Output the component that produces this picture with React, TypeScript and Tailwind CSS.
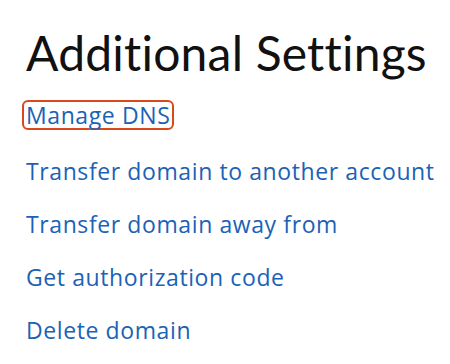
const links = [
  "Transfer domain to another account",
  "Transfer domain away from",
  "Get authorization code",
  "Delete domain",
];

export default function App() {
  return (
    <main className="h-[364px] w-[450px] bg-white pl-[26px] pt-[24px] font-['Lato',sans-serif]">
      <h2 className="text-[48px] leading-[58px] font-normal tracking-[0.2px] text-[#111111]">Additional Settings</h2>
      <div className="mt-[18px] flex flex-col items-start gap-[25px] font-['Open_Sans',sans-serif] tracking-[0.6px]">
        <a
          href="#"
          className="-ml-[4px] mb-[2px] rounded-[6px] border-2 border-[#d9491c] px-[2px] text-[23px] leading-[26px] text-[#1b62b6]"
        >
          Manage DNS
        </a>
        {links.map((label) => (
          <a key={label} href="#" className="text-[23px] leading-[28px] text-[#1b62b6]">
            {label}
          </a>
        ))}
      </div>
    </main>
  );
}
